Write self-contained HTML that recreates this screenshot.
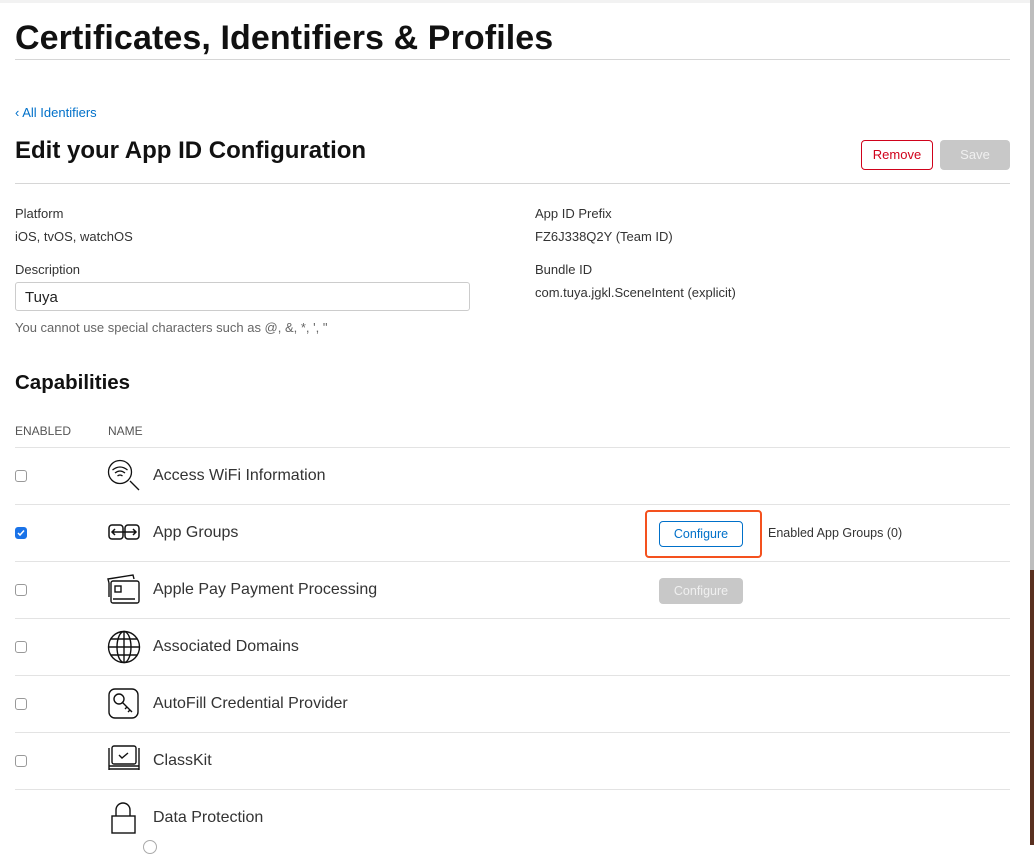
<!DOCTYPE html>
<html><head><meta charset="utf-8"><style>
*{margin:0;padding:0;box-sizing:border-box}
body{width:1034px;height:845px;overflow:hidden;background:#fff;font-family:"Liberation Sans",sans-serif;color:#1d1d1f;position:relative}
.a{position:absolute;white-space:nowrap}
.hr{position:absolute;height:1px;background:#e3e3e3}
.cb{position:absolute;left:15px;width:12px;height:12px;border:1px solid #999;border-radius:3px;background:#fff}
.nm{position:absolute;left:153px;font-size:16px;color:#333}
svg{position:absolute}
</style></head><body>
<div class="a" style="left:0;top:0;width:1034px;height:3px;background:#f2f2f2"></div>
<div class="a" style="left:1030px;top:0;width:4px;height:570px;background:#bdbdbd"></div>
<div class="a" style="left:1030px;top:570px;width:4px;height:275px;background:#5a3020"></div>
<div class="a" style="left:15px;top:19px;font-size:34px;font-weight:bold;color:#111;letter-spacing:0.1px">Certificates, Identifiers &amp; Profiles</div>
<div class="hr" style="left:15px;top:59px;width:995px;background:#d6d6d6"></div>
<div class="a" style="left:15px;top:105px;font-size:13px;color:#0070c9">‹ All Identifiers</div>
<div class="a" style="left:15px;top:137px;font-size:24px;font-weight:bold;color:#111">Edit your App ID Configuration</div>
<div class="a" style="left:861px;top:140px;width:72px;height:30px;border:1px solid #d0021b;border-radius:4px;color:#d0021b;font-size:13px;text-align:center;line-height:28px">Remove</div>
<div class="a" style="left:940px;top:140px;width:70px;height:30px;background:#c8c8c8;border-radius:4px;color:#f0f0f0;font-size:13px;text-align:center;line-height:30px">Save</div>
<div class="hr" style="left:15px;top:183px;width:995px;background:#d6d6d6"></div>
<div class="a" style="left:15px;top:206px;font-size:13px;color:#333">Platform</div>
<div class="a" style="left:15px;top:229px;font-size:13px;color:#333">iOS, tvOS, watchOS</div>
<div class="a" style="left:15px;top:262px;font-size:13px;color:#333">Description</div>
<div class="a" style="left:15px;top:282px;width:455px;height:29px;border:1px solid #ccc;border-radius:3px;font-size:15px;padding:6px 9px;color:#222">Tuya</div>
<div class="a" style="left:15px;top:320px;font-size:13px;color:#666">You cannot use special characters such as @, &amp;, *, ', "</div>
<div class="a" style="left:535px;top:206px;font-size:13px;color:#333">App ID Prefix</div>
<div class="a" style="left:535px;top:229px;font-size:13px;color:#333">FZ6J338Q2Y (Team ID)</div>
<div class="a" style="left:535px;top:262px;font-size:13px;color:#333">Bundle ID</div>
<div class="a" style="left:535px;top:285px;font-size:13px;color:#333">com.tuya.jgkl.SceneIntent (explicit)</div>
<div class="a" style="left:15px;top:371px;font-size:20.5px;font-weight:bold;color:#111">Capabilities</div>
<div class="a" style="left:15px;top:424px;font-size:12px;color:#555">ENABLED</div>
<div class="a" style="left:108px;top:424px;font-size:12px;color:#555">NAME</div>
<div class="hr" style="left:15px;top:447px;width:995px"></div>
<div class="hr" style="left:15px;top:504px;width:995px"></div>
<div class="hr" style="left:15px;top:561px;width:995px"></div>
<div class="hr" style="left:15px;top:618px;width:995px"></div>
<div class="hr" style="left:15px;top:675px;width:995px"></div>
<div class="hr" style="left:15px;top:732px;width:995px"></div>
<div class="hr" style="left:15px;top:789px;width:995px"></div>

<div class="cb" style="top:470px"></div>
<div class="cb" style="top:527px;background:#1a73e8;border-color:#1a73e8"><svg width="10" height="10" style="left:0;top:0"><path d="M2 5l2 2 4-4.5" stroke="#fff" stroke-width="1.5" fill="none"/></svg></div>
<div class="cb" style="top:584px"></div>
<div class="cb" style="top:641px"></div>
<div class="cb" style="top:698px"></div>
<div class="cb" style="top:755px"></div>

<svg style="left:107px;top:459px" width="34" height="34" fill="none" stroke="#111" stroke-width="1.3"><circle cx="13" cy="13" r="11.5"/><path d="M23 22l9 9"/><path d="M5.5 11q7.5-6 15 0M8 14q5-4 10 0M10.5 17q2.5-2 5 0"/></svg>
<div class="nm" style="top:467px">Access WiFi Information</div>
<svg style="left:108px;top:523px" width="32" height="20" fill="none" stroke="#111" stroke-width="1.5"><rect x="1" y="2" width="14" height="14" rx="3"/><rect x="17" y="2" width="14" height="14" rx="3"/><path d="M4 9h24M7 6l-3 3 3 3M25 6l3 3-3 3"/></svg>
<div class="nm" style="top:524px">App Groups</div>
<svg style="left:107px;top:573px" width="34" height="32" fill="none" stroke="#111" stroke-width="1.4"><path d="M2 10L1 6l25-4 1 4"/><rect x="4" y="8" width="28" height="22" rx="2"/><path d="M2 10v14M6 26h22"/><rect x="8" y="13" width="6" height="6"/></svg>
<div class="nm" style="top:581px">Apple Pay Payment Processing</div>
<svg style="left:107px;top:630px" width="34" height="34" fill="none" stroke="#111" stroke-width="1.4"><circle cx="17" cy="17" r="15.5"/><ellipse cx="17" cy="17" rx="7" ry="15.5"/><path d="M17 1.5v31M1.5 17h31M4 9h26M4 25h26"/></svg>
<div class="nm" style="top:638px">Associated Domains</div>
<svg style="left:108px;top:688px" width="32" height="32" fill="none" stroke="#111" stroke-width="1.4"><rect x="1" y="1" width="29" height="29" rx="6"/><circle cx="11" cy="11" r="5"/><path d="M14 14l10 10M19 19l-2 2M22 22l-2 2"/></svg>
<div class="nm" style="top:695px">AutoFill Credential Provider</div>
<svg style="left:108px;top:744px" width="32" height="28" fill="none" stroke="#111" stroke-width="1.4"><rect x="4" y="2" width="24" height="18" rx="2"/><path d="M1 4v22M31 4v22M1 25h30M1 22h30M11 11l3 3 6-5"/></svg>
<div class="nm" style="top:752px">ClassKit</div>
<svg style="left:110px;top:802px" width="28" height="32" fill="none" stroke="#111" stroke-width="1.4"><path d="M6 14V8a7 7 0 0 1 14 0v6"/><rect x="2" y="14" width="23" height="17"/></svg>
<div class="nm" style="top:809px">Data Protection</div>
<div class="a" style="left:143px;top:840px;width:14px;height:14px;border:1px solid #aaa;border-radius:50%"></div>

<div class="a" style="left:645px;top:510px;width:117px;height:48px;border:2.5px solid #f4511e;border-radius:4px"></div>
<div class="a" style="left:659px;top:521px;width:84px;height:26px;border:1px solid #0070c9;border-radius:4px;color:#0070c9;font-size:12.5px;text-align:center;line-height:24px">Configure</div>
<div class="a" style="left:768px;top:526px;font-size:12.5px;color:#333">Enabled App Groups (0)</div>
<div class="a" style="left:659px;top:578px;width:84px;height:26px;background:#c8c8c8;border-radius:4px;color:#f0f0f0;font-size:12.5px;text-align:center;line-height:26px">Configure</div>
</body></html>
